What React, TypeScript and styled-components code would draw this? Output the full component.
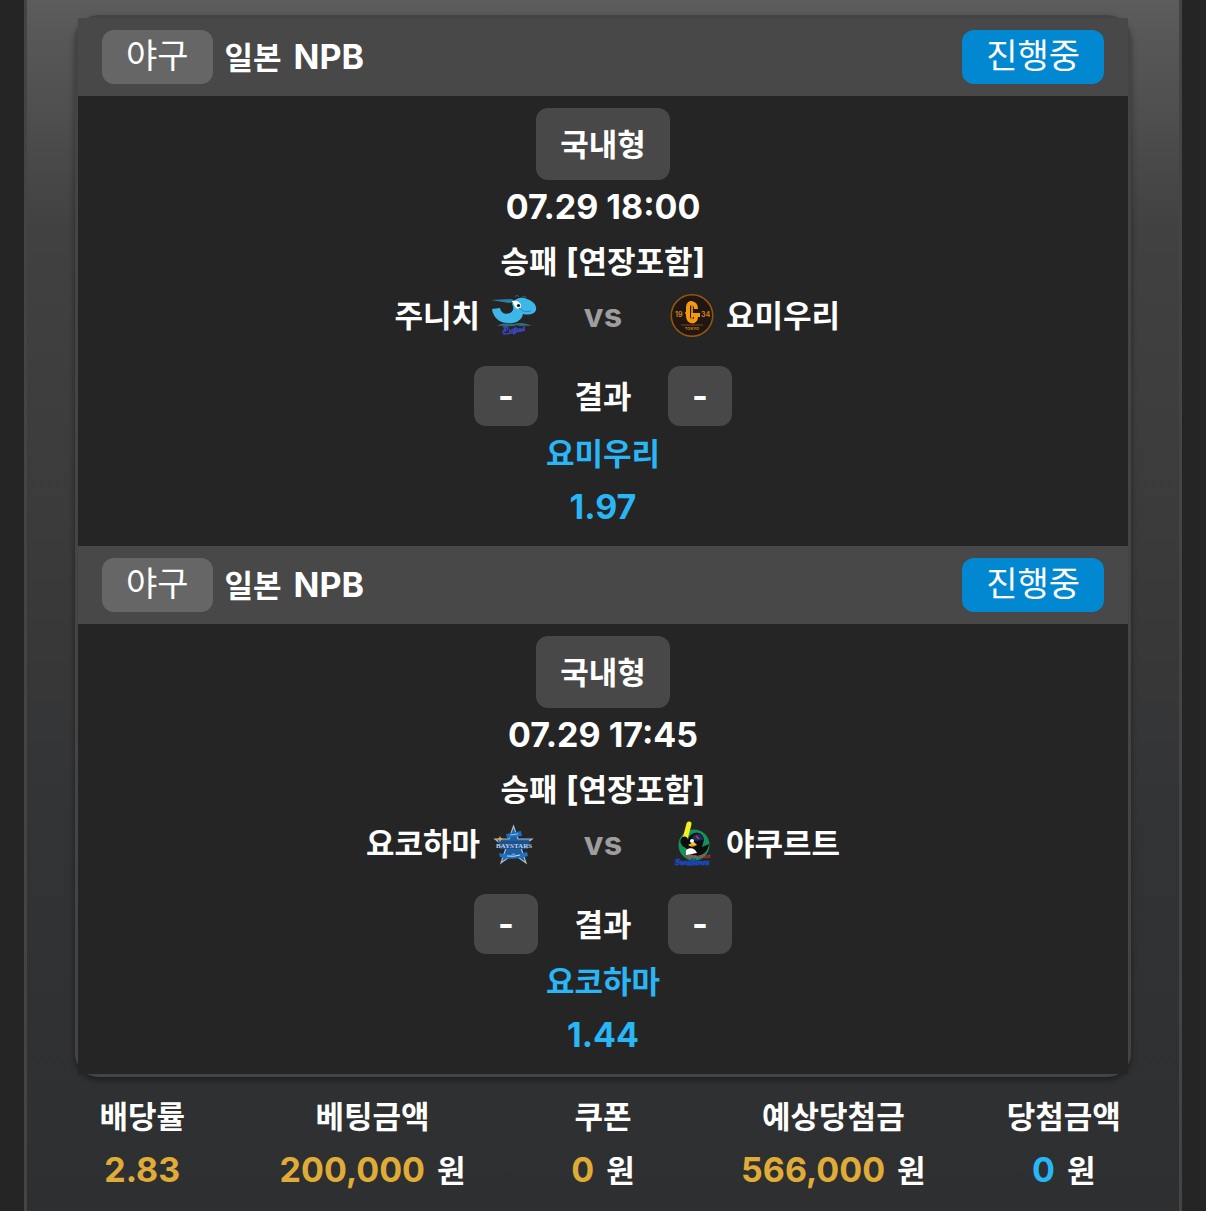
import React from "react";
import styled, { createGlobalStyle } from "styled-components";

const Global = createGlobalStyle`
  * { box-sizing: border-box; }
  body {
    margin: 0;
    background: #252525;
    color: #fff;
    font-family: Inter, "Noto Sans CJK KR", sans-serif;
    font-size: 34px;
    font-weight: 700;
    line-height: 54px;
  }
`;

const Ko = styled.span<{ $light?: boolean }>`
  font-family: "Noto Sans CJK KR", sans-serif;
  font-size: ${(p) => (p.$light ? 34 : 31)}px;
  font-weight: ${(p) => (p.$light ? 400 : 700)};
  line-height: 1;
`;

const Panel = styled.main`
  min-height: 100vh;
  margin: 0 24px;
  padding-top: 15px;
  border: solid #444;
  border-width: 0 3px;
  background: linear-gradient(#5c5c5c 0, #414141 230px, #3a3a3a 560px, #323335 840px, #2e2f31 1211px);
`;

const Slip = styled.section`
  margin: 0 48px 12px;
  border: 3px solid #444;
  border-radius: 24px;
  box-shadow: 0 3px 6px rgba(0, 0, 0, 0.4);
`;

const Header = styled.header`
  display: flex;
  align-items: center;
  gap: 12px;
  padding: 12px 24px;
  background: #484848;
`;

const League = styled.h2`
  display: flex;
  flex: 1;
  align-items: baseline;
  gap: 12px;
  height: 54px;
  margin: 0;
  font: inherit;
`;

const Badge = styled.span<{ $active?: boolean }>`
  height: 54px;
  padding: 0 24px;
  border-radius: 12px;
  line-height: 52px;
  background: ${(p) => (p.$active ? "#0288d1" : "#666")};
`;

const Body = styled.div`
  display: flex;
  flex-direction: column;
  align-items: center;
  padding: 12px 0;
  background: #252525;
`;

const TypeTag = styled.div`
  height: 72px;
  padding: 0 24px;
  border-radius: 12px;
  line-height: 72px;
  background: #484848;
`;

const Line = styled.div<{ $accent?: boolean }>`
  height: 54px;
  color: ${(p) => (p.$accent ? "#29b6f6" : "#fff")};
`;

const Versus = styled.div`
  display: grid;
  grid-template-columns: 1fr 130px 1fr;
  align-self: stretch;
  height: 54px;
  margin-bottom: 24px;
  text-align: center;
`;

const Team = styled.div<{ $away?: boolean }>`
  display: flex;
  flex-direction: ${(p) => (p.$away ? "row" : "row-reverse")};
  align-items: center;
  gap: 10px;
`;

const TeamName = styled.div`
  height: 54px;
`;

const Vs = styled.span`
  color: #9e9e9e;
  font-size: 33px;
`;

const Result = styled.div`
  display: grid;
  grid-template-columns: 64px 130px 64px;
  height: 60px;
  line-height: 60px;
  text-align: center;
`;

const Score = styled.span`
  border-radius: 12px;
  background: #484848;
`;

const Summary = styled.table`
  width: 100%;
  table-layout: fixed;
  border-collapse: collapse;
  text-align: center;

  th, td {
    height: 54px;
    padding: 0;
    white-space: nowrap;
  }
`;

const Money = styled.div`
  display: flex;
  justify-content: center;
  align-items: baseline;
  gap: 12px;
  height: 54px;
`;

const Amount = styled.span<{ $blue?: boolean }>`
  color: ${(p) => (p.$blue ? "#29b6f6" : "#e0ac38")};
`;

const Logo = styled.svg`
  display: block;
  width: 48px;
  height: 48px;
`;

const Dragons = () => (
  <Logo viewBox="0 0 48 48" aria-hidden="true">
    <path d="M2 18L10 17C11 22 15 24 20 22C24 20 24 16 22 13C24 8 31 5 37 8C43 10 47 14 46 19C44 24 38 24 33 23C32 29 26 33 18 32C9 32 3 26 2 18Z" fill="#3fb6e8" />
    <path d="M1 9L22 8L25 11L19 12Z" fill="#2b7fa3" />
    <path d="M22 10C26 9 31 11 31 15C31 18 27 19 25 16Z" fill="#fff" />
    <circle cx="28.5" cy="14.5" r="1.6" fill="#111" />
    <path d="M29 17C33 21 37 21 41 20" fill="none" stroke="#2a86ad" />
    <path d="M25 6L27 4L29 6M32 6L35 5L36 7" fill="none" stroke="#24617b" />
    <path d="M7 35C13 31 20 33 24 33C30 31 36 32 42 35C35 34 30 36 27 34C20 37 13 34 7 35Z" fill="#2f6f74" />
    <path d="M13 36C19 34 20 38 13 41C14 39 15 37 16 36M20 38C18 43 23 40 22 38L24 42L26 37C24 36 23 40 26 40C25 44 22 43 24 41M28 37C26 41 30 40 30 37L31 40L34 36V39M13 43C20 43 25 41 35 39" fill="none" stroke="#3a45c4" strokeWidth="1.4" />
  </Logo>
);

const Giants = () => (
  <Logo viewBox="0 0 48 48" aria-hidden="true">
    <circle cx="24" cy="24.5" r="20.7" fill="#211614" stroke="#91590b" strokeWidth="1.5" />
    <path d="M28 18C28 11 20 10 20 16V25C20 32 28 32 28 26V24M23 24H32" fill="none" stroke="#f59a0c" strokeWidth="4" />
    <path d="M24 11V31M17 22H20" stroke="#f59a0c" strokeWidth="1.6" />
    <g fill="#c78018" fontFamily="Inter" fontWeight="700" fontSize="7">
      <text x="7" y="26">19</text>
      <text x="33" y="26">34</text>
      <text x="24" y="39" fontSize="4" textAnchor="middle">TOKYO</text>
    </g>
    <path d="M13 34H35" stroke="#8d5608" strokeWidth="0.8" />
  </Logo>
);

const BayStars = () => (
  <Logo viewBox="0 0 48 48" aria-hidden="true">
    <path d="M23.500 7L28 20H42L31 29L36 44L23.500 35L11 44L16 29L5 20H19Z" fill="#1f5f9f" stroke="#a9bccb" strokeWidth="1.2" />
    <path d="M16 15L31 12L32 17L17 19Z" fill="#1c6fc0" />
    <path d="M20 16L28 15" stroke="#b8d4ec" strokeWidth="0.8" />
    <path d="M8 22H40L38 30H10Z" fill="#1b518e" />
    <text x="24" y="29" textAnchor="middle" fontFamily="Liberation Serif" fontWeight="700" fontSize="7" fill="#bfd3e4">BAYSTARS</text>
    <path d="M9 34Q23 38 37 33L38 37Q23 42 10 38Z" fill="#1c72c4" />
    <path d="M17 37Q24 38 30 36" fill="none" stroke="#c7dced" />
    <path d="M10 17L11 19L13 20L11 21L10 23L9 21L7 20L9 19Z" fill="#dda43c" />
  </Logo>
);

const Swallows = () => (
  <Logo viewBox="0 0 48 48" aria-hidden="true">
    <circle cx="26" cy="26" r="15.5" fill="#14925a" />
    <path d="M17 20L21 5" stroke="#f5ef22" strokeWidth="5" strokeLinecap="round" />
    <path d="M13 20C15 16 20 17 20 21L22 31L16 28C12 25 12 22 13 20Z" fill="#0b0d0f" />
    <path d="M20 21C22 12 35 11 36 21L34 28L41 25C40 32 36 36 29 37L18 34Z" fill="#0b0d0f" />
    <path d="M24 19C26 13 35 14 35 21L27 22Z" fill="#1c2a68" />
    <path d="M28 17L31 20" stroke="#d9343f" strokeWidth="1.5" />
    <circle cx="24" cy="22" r="2" fill="#fff" />
    <path d="M20 26L26 23L29 26L24 28Z" fill="#f1cf22" />
    <path d="M23 26L27 27L24 28Z" fill="#d83b2d" />
    <path d="M18 31C22 28 27 29 29 34L18 36Z" fill="#fff" />
    <text x="17" y="39" fontFamily="Inter" fontWeight="700" fontSize="4" fill="#d8323e">Tokyo Yakult</text>
    <text x="7" y="46" fontFamily="Liberation Serif" fontStyle="italic" fontWeight="700" fontSize="9" fill="#2455cc" stroke="#1747b8" strokeWidth="0.8">Swallows</text>
  </Logo>
);

type Match = {
  date: string;
  home: string;
  away: string;
  HomeLogo: React.FC;
  AwayLogo: React.FC;
  pick: string;
  odds: string;
};

const matches: Match[] = [
  { date: "07.29 18:00", home: "주니치", away: "요미우리", HomeLogo: Dragons, AwayLogo: Giants, pick: "요미우리", odds: "1.97" },
  { date: "07.29 17:45", home: "요코하마", away: "야쿠르트", HomeLogo: BayStars, AwayLogo: Swallows, pick: "요코하마", odds: "1.44" },
];

const totals = [
  { label: "배당률", value: "2.83" },
  { label: "베팅금액", value: "200,000", unit: "원" },
  { label: "쿠폰", value: "0", unit: "원" },
  { label: "예상당첨금", value: "566,000", unit: "원" },
  { label: "당첨금액", value: "0", unit: "원", blue: true },
];

const MatchCard = ({ date, home, away, HomeLogo, AwayLogo, pick, odds }: Match) => (
  <article>
    <Header>
      <Badge><Ko $light>야구</Ko></Badge>
      <League><Ko>일본</Ko> <span>NPB</span></League>
      <Badge $active><Ko $light>진행중</Ko></Badge>
    </Header>
    <Body>
      <TypeTag><Ko>국내형</Ko></TypeTag>
      <Line>{date}</Line>
      <Line><Ko>승패</Ko> [<Ko>연장포함</Ko>]</Line>
      <Versus>
        <Team><HomeLogo /><TeamName><Ko>{home}</Ko></TeamName></Team>
        <Vs>vs</Vs>
        <Team $away><AwayLogo /><TeamName><Ko>{away}</Ko></TeamName></Team>
      </Versus>
      <Result>
        <Score>-</Score>
        <span><Ko>결과</Ko></span>
        <Score>-</Score>
      </Result>
      <Line $accent><Ko>{pick}</Ko></Line>
      <Line $accent>{odds}</Line>
    </Body>
  </article>
);

export default function App() {
  return (
    <>
      <Global />
      <Panel>
        <Slip>
          {matches.map((m) => <MatchCard key={m.date} {...m} />)}
        </Slip>
        <Summary>
          <thead>
            <tr>{totals.map((t) => <th key={t.label} scope="col"><Ko>{t.label}</Ko></th>)}</tr>
          </thead>
          <tbody>
            <tr>
              {totals.map((t) => (
                <td key={t.label}>
                  <Money>
                    <Amount $blue={t.blue}>{t.value}</Amount>
                    {t.unit && <Ko>{t.unit}</Ko>}
                  </Money>
                </td>
              ))}
            </tr>
          </tbody>
        </Summary>
      </Panel>
    </>
  );
}
